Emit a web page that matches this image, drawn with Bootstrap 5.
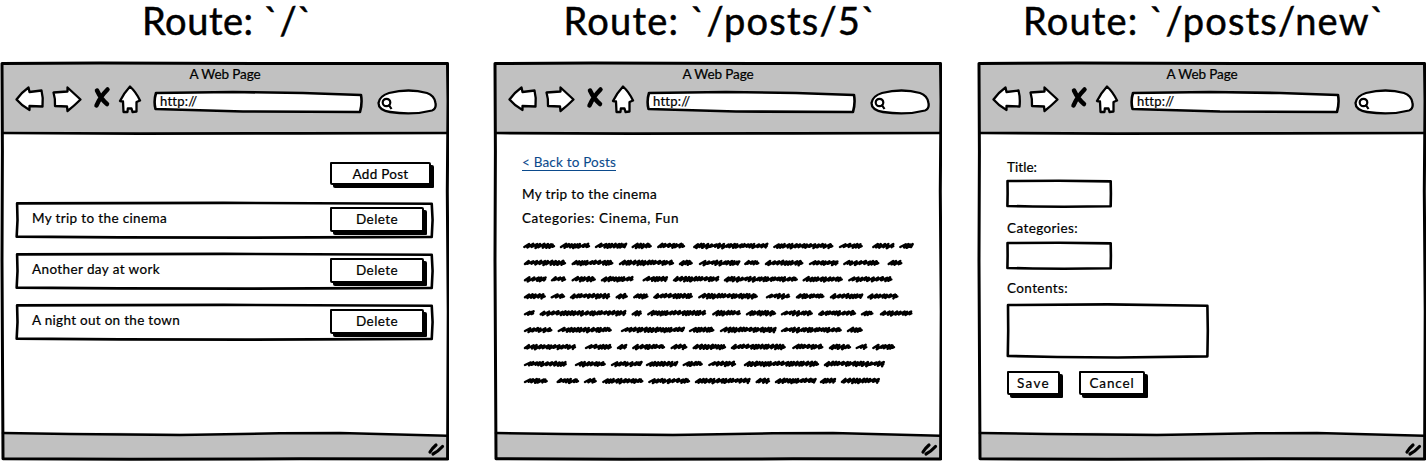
<!DOCTYPE html>
<html lang="en">
<head>
<meta charset="utf-8">
<title>Blog wireframes</title>
<link rel="stylesheet" href="https://cdn.jsdelivr.net/npm/bootstrap@5.3.0/dist/css/bootstrap.min.css">
<style>
body{width:1427px;height:461px;overflow:hidden;background:#fff;color:#000;font-family:Lato,"Open Sans",sans-serif;font-size:13.5px;line-height:18px;-webkit-text-stroke:.22px currentColor}
.board{gap:44px;width:1427px}
.pane{width:449px;flex:none}
.pane-last{margin-left:-9px}
.route{font-size:38px;font-weight:400;line-height:38px;height:61px;margin:0;padding-left:6px;-webkit-text-stroke:.5px #000}
.route span{margin-top:1px}
.fit{display:inline-block;white-space:pre}
.browser{height:400px}
.frame{left:0;top:0;z-index:0}
.chrome{height:73px;padding:4px 0 0 14px}
.page-title{margin-left:-13px;height:20px}
.tools{height:30px}
.address{width:210px;height:22px;margin:3px 0 0 10px;padding:1px 0 0 7px;font-size:13px}
.search{margin:3px 0 0 14px}
.outline{left:0;top:0;width:100%;height:100%;overflow:visible;z-index:-1}
#bar path,#rect path{fill:#fff;stroke:#000;stroke-width:2.6px;vector-effect:non-scaling-stroke;stroke-linejoin:round}
.sk{isolation:isolate}
.sbtn,.sbtn:hover{--bs-btn-border-radius:0;padding:0;border:2px solid #000;border-radius:1px 2px 1px 2px;background:#fff;color:#000;box-shadow:3px 3px 0 #000;font-size:13.5px;line-height:18px;-webkit-text-stroke:.22px #000}
.w-add{width:101px;height:23px}
.w-del{width:94px;height:25px}
.w-save{width:53px;height:24px}
.w-cancel{width:66px;height:24px;margin-left:19px}
.list-area{padding:28px 0 0 16px;width:434px}
.add-row{height:40px;padding-right:3px}
.post{height:36px;margin-bottom:15px;padding:0 10px 2px 16px}
.post>.fit{margin-top:-2px}
.post .outline{left:-1px;top:-.5px}
.article{padding:19px 0 0 29px}
.back-row{height:32px}
.line-a{height:24px}
.line-b{height:31px}
.back{color:#0b4a8c;text-decoration:none;border-bottom:1px solid #0b4a8c;line-height:15px;-webkit-text-stroke:.1px}
.form-area{padding:24px 0 0 29px}
.form-area label{display:block;height:18px}
.form-area label .fit{margin-left:1px}
.field{width:104px;height:27px;margin:4px 0 12px 1px}
.field-2{margin:5px 0 10px 1px}
.field-lg{width:201px;height:55px;margin:6px 0 13px 1px}
.actions{margin-left:1px}
</style>
</head>
<body>
<svg width="0" height="0" class="position-absolute">
<defs>
<g id="win">
<path fill="#c1c1c1" d="M2 2H447V72H2ZM2 372.500L120 371.700L230 373.500L330 372.500L447 375.500V398H2Z"/>
<g fill="none" stroke="#000" stroke-width="3" stroke-linecap="round" stroke-linejoin="round">
<path d="M2 2.500L100 2L260 2.600L447.500 2.400L448 40L447.300 130L448.200 250L447.600 398L300 397.800L130 398.300L3 397.800L2.500 300L2 200L2.400 90Z"/>
<path d="M3 72L140 72.600L300 72.300L447 72" stroke-width="2.700"/>
<path d="M3 372L70 373L180 374L280 372.300L340 371.900L447 374.700" stroke-width="2.500"/>
</g>
<path d="M430 391Q432 387.500 436 384M433 393Q438 390.500 442.500 385.500" fill="none" stroke="#000" stroke-width="3.200" stroke-linecap="round"/>
</g>
<g id="icons" fill="#fff" stroke="#000" stroke-width="2.300" stroke-linejoin="round" stroke-linecap="round">
<path d="M2.500 14.500Q8 7 14.500 2.500L15.500 7L27.500 5.500Q29.500 13 28.500 21.500L15.500 21L15.500 25Q8 21 2.500 14.500Z"/>
<path d="M39.500 7.500L53.500 6.500L53.500 2.500Q60.500 9 66.500 14.500Q60 21 53.500 26L53 21.500L41 21Q41.500 14 39.500 7.500Z"/>
<path d="M116 1.500Q110 8 106 16L109 16.500L109.500 27L113.500 27L113.800 23.500L117.500 23.500L118.500 27L122.500 26.500L122.500 17L126 15.500Q122 7 116 1.500Z"/>
<path d="M83 5.500Q87 14 93 19M93.500 4.500Q86 12 82.500 20.500" fill="none" stroke-width="4.500"/>
</g>
<g id="searchbox">
<path d="M12 4Q32-1 50 4Q57.500 6.500 58.500 14Q59.500 20 55 21.500Q36 26.500 13 23Q1.500 21 1.500 14Q2.500 7 12 4Z" fill="#fff" stroke="#000" stroke-width="2.300"/>
<g fill="none" stroke="#000" stroke-width="2.200"><ellipse cx="9.500" cy="13.500" rx="3.800" ry="3.700"/><path d="M11.500 15.500L14.500 20"/></g>
</g>
<symbol id="bar" viewBox="0 0 210 22" preserveAspectRatio="none" overflow="visible"><path d="M3 2L80 1L150 2L208 4Q209.500 12 207 21L90 20.500L2.500 18Q.5 10 3 2Z"/></symbol>
<symbol id="rect" viewBox="0 0 100 40" preserveAspectRatio="none" overflow="visible"><path d="M.5 1.500L50 1L99.700 2L99.900 20L99.700 38.800L55 39.600L25 39.300L.4 38.500L.6 20Z"/></symbol>
</defs>
</svg>

<main class="board d-flex">
<section class="pane">
 <h1 class="route text-center"><span class="fit" data-w="171">Route: `/`</span></h1>
 <div class="browser position-relative">
  <svg class="frame position-absolute" width="449" height="400"><use href="#win"/></svg>
  <div class="position-relative">
   <header class="chrome">
    <div class="page-title text-center"><span class="fit" data-w="71">A Web Page</span></div>
    <div class="tools d-flex align-items-center">
     <svg width="129" height="30"><use href="#icons"/></svg>
     <div class="address sk position-relative"><svg class="outline position-absolute"><use href="#bar"/></svg><span class="fit" data-w="37">http://</span></div>
     <svg class="search" width="60" height="26"><use href="#searchbox"/></svg>
    </div>
   </header>
   <div class="list-area">
    <div class="add-row d-flex justify-content-end align-items-start"><button class="btn sbtn w-add"><span class="fit" data-w="56">Add Post</span></button></div>
    <div class="post sk position-relative d-flex align-items-center justify-content-between"><svg class="outline position-absolute"><use href="#rect"/></svg><span class="fit" data-w="135">My trip to the cinema</span><button class="btn sbtn w-del"><span class="fit" data-w="42">Delete</span></button></div>
    <div class="post sk position-relative d-flex align-items-center justify-content-between"><svg class="outline position-absolute"><use href="#rect"/></svg><span class="fit" data-w="128">Another day at work</span><button class="btn sbtn w-del"><span class="fit" data-w="42">Delete</span></button></div>
    <div class="post sk position-relative d-flex align-items-center justify-content-between"><svg class="outline position-absolute"><use href="#rect"/></svg><span class="fit" data-w="148">A night out on the town</span><button class="btn sbtn w-del"><span class="fit" data-w="42">Delete</span></button></div>
   </div>
  </div>
 </div>
</section>

<section class="pane">
 <h1 class="route text-center"><span class="fit" data-w="314">Route: `/posts/5`</span></h1>
 <div class="browser position-relative">
  <svg class="frame position-absolute" width="449" height="400"><use href="#win"/></svg>
  <div class="position-relative">
   <header class="chrome">
    <div class="page-title text-center"><span class="fit" data-w="71">A Web Page</span></div>
    <div class="tools d-flex align-items-center">
     <svg width="129" height="30"><use href="#icons"/></svg>
     <div class="address sk position-relative"><svg class="outline position-absolute"><use href="#bar"/></svg><span class="fit" data-w="37">http://</span></div>
     <svg class="search" width="60" height="26"><use href="#searchbox"/></svg>
    </div>
   </header>
   <article class="article">
    <div class="back-row"><a href="#" class="back fit" data-w="94">&lt; Back to Posts</a></div>
    <div class="line-a"><span class="fit" data-w="135">My trip to the cinema</span></div>
    <div class="line-b"><span class="fit" data-w="157">Categories: Cinema, Fun</span></div>
    <svg id="scribble" class="d-block" width="400" height="155" fill="none" stroke="#000" stroke-width="2.400" stroke-linecap="round" stroke-linejoin="round"></svg>
   </article>
  </div>
 </div>
</section>

<section class="pane pane-last">
 <h1 class="route text-center"><span class="fit" data-w="363">Route: `/posts/new`</span></h1>
 <div class="browser position-relative">
  <svg class="frame position-absolute" width="449" height="400"><use href="#win"/></svg>
  <div class="position-relative">
   <header class="chrome">
    <div class="page-title text-center"><span class="fit" data-w="71">A Web Page</span></div>
    <div class="tools d-flex align-items-center">
     <svg width="129" height="30"><use href="#icons"/></svg>
     <div class="address sk position-relative"><svg class="outline position-absolute"><use href="#bar"/></svg><span class="fit" data-w="37">http://</span></div>
     <svg class="search" width="60" height="26"><use href="#searchbox"/></svg>
    </div>
   </header>
   <form class="form-area">
    <label><span class="fit" data-w="30">Title:</span></label>
    <div class="field sk position-relative"><svg class="outline position-absolute"><use href="#rect"/></svg></div>
    <label><span class="fit" data-w="71">Categories:</span></label>
    <div class="field field-2 sk position-relative"><svg class="outline position-absolute"><use href="#rect"/></svg></div>
    <label><span class="fit" data-w="61">Contents:</span></label>
    <div class="field-lg sk position-relative"><svg class="outline position-absolute"><use href="#rect"/></svg></div>
    <div class="actions d-flex"><button type="button" class="btn sbtn w-save"><span class="fit" data-w="33">Save</span></button><button type="button" class="btn sbtn w-cancel"><span class="fit" data-w="45">Cancel</span></button></div>
   </form>
  </div>
 </div>
</section>
</main>
<script src="https://cdn.jsdelivr.net/npm/bootstrap@5.3.0/dist/js/bootstrap.bundle.min.js"></script>
<script>
// spread each label's letters to its width
document.querySelectorAll('.fit').forEach(function(e){
  var s=(e.dataset.w-e.getBoundingClientRect().width)/e.textContent.length;
  e.style.letterSpacing=s.toFixed(3)+'px';
});
// scribbled body copy: start and end of every word, in thirds of a pixel
var rows=[
[25,120,135,225,240,333,350,410,427,510,535,758,775,955,972,1043,1072,1138,1153,1192],
[27,153,170,295,312,477,492,533,552,673,688,733,750,865,882,970,985,1093,1118,1162],
[27,93,108,153,170,242,258,355,383,457,474,612,627,848,863,983,1000,1132],
[27,92,107,150,165,285,302,338,355,400,415,533,550,728,753,825,843,928,945,1042,1057,1150],
[27,57,74,333,350,380,397,573,592,677,693,783,798,893,910,1023,1038,1075,1095,1192],
[27,112,128,290,318,507,522,598,615,783,798,980,996,1043],
[27,183,210,290,306,335,352,450,467,517,533,633,648,812,832,925,942,1008,1022,1057,1072,1140],
[27,155,180,272,288,378,393,487,503,563,580,663,687,912,927,1108],
[27,98,125,192,207,245,262,385,400,525,540,705,722,765,780,900,915,962,978,1093]];
var mid=[10.7,27.7,44,61,78,94.7,111.7,128.7,145.7],d='',k=7;
function rnd(){k=(k*73+41)%997;return k/997}
rows.forEach(function(r,i){
  for(var j=0;j<r.length;j+=2){
    var a=r[j]/3-7,b=r[j+1]/3-8,y=mid[i]-4.9,x=a+1;
    d+='M'+x.toFixed(1)+' '+(y+1.2).toFixed(1);
    while(x<b-4){
      var st=2.2+rnd()*2.8;
      d+='L'+(x+st+1).toFixed(1)+' '+(y-1.3-rnd()*.8).toFixed(1)+'L'+(x+st-.7).toFixed(1)+' '+(y+.9+rnd()*1.6).toFixed(1);
      x+=st;
    }
    d+='L'+(b-1.3).toFixed(1)+' '+(y-1.2).toFixed(1)+'L'+(b-1.6).toFixed(1)+' '+(y+1).toFixed(1)+'L'+b.toFixed(1)+' '+(y+.4).toFixed(1);
  }
});
document.getElementById('scribble').innerHTML='<path d="'+d+'"/>';
</script>
</body>
</html>
